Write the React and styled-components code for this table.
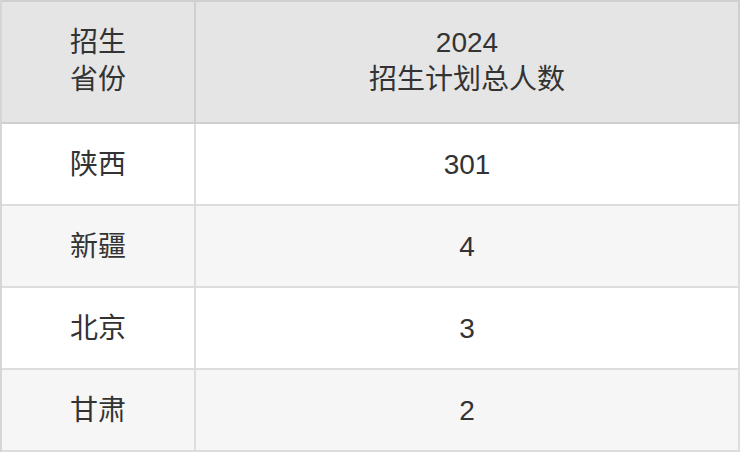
import React from "react";
import styled, { createGlobalStyle } from "styled-components";

const Global = createGlobalStyle`
  html, body { margin: 0; padding: 0; background: #fff; }
  body { font-family: "Liberation Sans", "Noto Sans CJK SC", sans-serif; }
`;

const Table = styled.table`
  width: 740px;
  border-collapse: separate;
  border-spacing: 0;
  border-top: 2px solid #cfcfcf;
  border-left: 2px solid #d6d6d6;
  table-layout: fixed;
  color: #333;
  font-size: 28px;
  line-height: 37px;
`;

const HeadCell = styled.th`
  background: #e5e5e5;
  font-weight: normal;
  height: 118px;
  padding: 0 0 2px;
  box-sizing: content-box;
  text-align: center;
  vertical-align: middle;
  border-right: 2px solid #cfcfcf;
  border-bottom: 2px solid #cfcfcf;
  width: ${(p) => p.$w || "auto"};
`;

const Row = styled.tr`
  background: ${(p) => (p.$alt ? "#f6f6f6" : "#ffffff")};
`;

const Cell = styled.td`
  height: 80px;
  padding: 0;
  text-align: center;
  vertical-align: middle;
  border-right: 2px solid #dddddd;
  border-bottom: 2px solid #dddddd;
`;

const rows = [
  ["陕西", "301"],
  ["新疆", "4"],
  ["北京", "3"],
  ["甘肃", "2"],
];

export default function App() {
  return (
    <>
      <Global />
      <Table>
        <thead>
          <tr>
            <HeadCell $w="192px">
              招生
              <br />
              省份
            </HeadCell>
            <HeadCell>
              2024
              <br />
              招生计划总人数
            </HeadCell>
          </tr>
        </thead>
        <tbody>
          {rows.map(([p, n], i) => (
            <Row key={p} $alt={i % 2 === 1}>
              <Cell>{p}</Cell>
              <Cell>{n}</Cell>
            </Row>
          ))}
        </tbody>
      </Table>
    </>
  );
}
